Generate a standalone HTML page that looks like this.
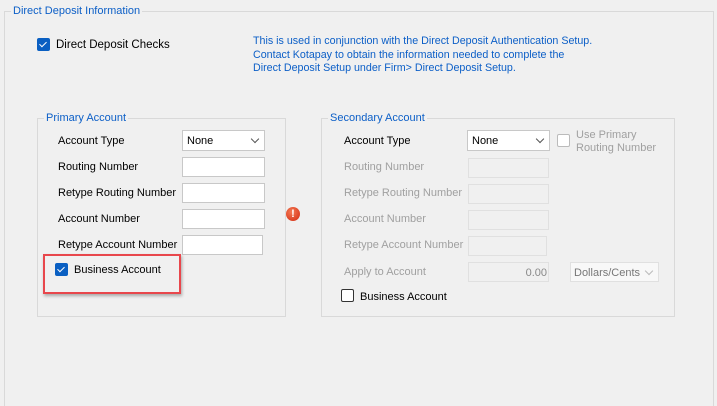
<!DOCTYPE html><html><head><style>
html,body{margin:0;width:717px;height:406px;overflow:hidden}
body{background:#f0f0f0;font-family:"Liberation Sans",sans-serif;font-size:11px;color:#000;position:relative}
.a{position:absolute;white-space:nowrap}
.box{position:absolute;border:1px solid #d9d9d9}
.lg{position:absolute;background:#f0f0f0;color:#0c5fc7;padding:0 2px;white-space:nowrap}
.in{position:absolute;background:#fff;border:1px solid #c8c8c8;height:18px}
.dis{background:#f0f0f0;border-color:#e0e0e0}
.g{color:#a0a0a0}
.cb{position:absolute;width:13px;height:13px;border-radius:2px;background:#0a5fc2}
.cb:after{content:"";position:absolute;left:4px;top:2px;width:3px;height:6px;border:solid #fff;border-width:0 1px 1px 0;transform:rotate(45deg)}
.ub{position:absolute;width:11px;height:11px;border:1px solid #333;border-radius:2px;background:#fff}
.chev{position:absolute;right:6px;top:5px;width:5px;height:5px;border:solid #555;border-width:0 1px 1px 0;transform:rotate(45deg)}
</style></head><body>
<div class="box" style="left:4px;top:11px;width:708px;height:400px"></div>
<div class="lg" style="left:11px;top:5px;font-size:11px">Direct Deposit Information</div>
<div class="cb" style="left:37px;top:38px"></div>
<div class="a" style="left:56px;top:39px;font-size:11.5px">Direct Deposit Checks</div>
<div class="a" style="left:253px;top:35px;color:#0c5fc7;line-height:13.5px;font-size:10.7px">This is used in conjunction with the Direct Deposit Authentication Setup.<br>Contact Kotapay to obtain the information needed to complete the<br>Direct Deposit Setup under Firm&gt; Direct Deposit Setup.</div>

<div class="box" style="left:37px;top:118px;width:247px;height:197px"></div>
<div class="lg" style="left:44px;top:112px">Primary Account</div>
<div class="a" style="left:58px;top:135px">Account Type</div>
<div class="in" style="left:182px;top:130px;width:81px;height:19px"><span class="a" style="left:4px;top:4px">None</span><div class="chev"></div></div>
<div class="a" style="left:58px;top:161px">Routing Number</div><div class="in" style="left:182px;top:157px;width:81px"></div>
<div class="a" style="left:58px;top:187px">Retype Routing Number</div><div class="in" style="left:182px;top:183px;width:81px"></div>
<div class="a" style="left:58px;top:213px">Account Number</div><div class="in" style="left:182px;top:209px;width:81px"></div>
<div class="a" style="left:58px;top:239px">Retype Account Number</div><div class="in" style="left:182px;top:235px;width:79px"></div>
<div class="cb" style="left:55px;top:263px"></div>
<div class="a" style="left:74px;top:264px">Business Account</div>
<div style="position:absolute;left:43px;top:254px;width:134px;height:36px;border:2px solid #e8474c;box-shadow:1px 2px 3px rgba(0,0,0,.3)"></div>

<div style="position:absolute;left:286px;top:207px;width:14px;height:14px;border-radius:50%;background:radial-gradient(circle at 40% 35%,#f47a55,#d22a10);color:#fff;font-weight:bold;font-size:11px;text-align:center;line-height:14px">!</div>

<div class="box" style="left:321px;top:118px;width:352px;height:197px"></div>
<div class="lg" style="left:328px;top:112px">Secondary Account</div>
<div class="a" style="left:344px;top:135px">Account Type</div>
<div class="in" style="left:467px;top:130px;width:81px;height:19px"><span class="a" style="left:4px;top:4px">None</span><div class="chev"></div></div>
<div class="ub" style="left:557px;top:134px;border-color:#bbb"></div>
<div class="a g" style="left:576px;top:129px;line-height:13px">Use Primary<br>Routing Number</div>
<div class="a g" style="left:344px;top:161px">Routing Number</div><div class="in dis" style="left:468px;top:158px;width:79px"></div>
<div class="a g" style="left:344px;top:187px">Retype Routing Number</div><div class="in dis" style="left:468px;top:184px;width:79px"></div>
<div class="a g" style="left:344px;top:213px">Account Number</div><div class="in dis" style="left:468px;top:210px;width:79px"></div>
<div class="a g" style="left:344px;top:239px">Retype Account Number</div><div class="in dis" style="left:468px;top:236px;width:77px"></div>
<div class="a g" style="left:344px;top:266px">Apply to Account</div><div class="in dis" style="left:468px;top:262px;width:79px"><span class="a g" style="right:1px;top:4px;color:#888">0.00</span></div>
<div class="in dis" style="left:570px;top:262px;width:87px;background:#f8f8f8"><span class="a" style="left:3px;top:4px;color:#777">Dollars/Cents</span><div class="chev" style="border-color:#bbb"></div></div>
<div class="ub" style="left:341px;top:289px"></div>
<div class="a" style="left:360px;top:291px">Business Account</div>
</body></html>
